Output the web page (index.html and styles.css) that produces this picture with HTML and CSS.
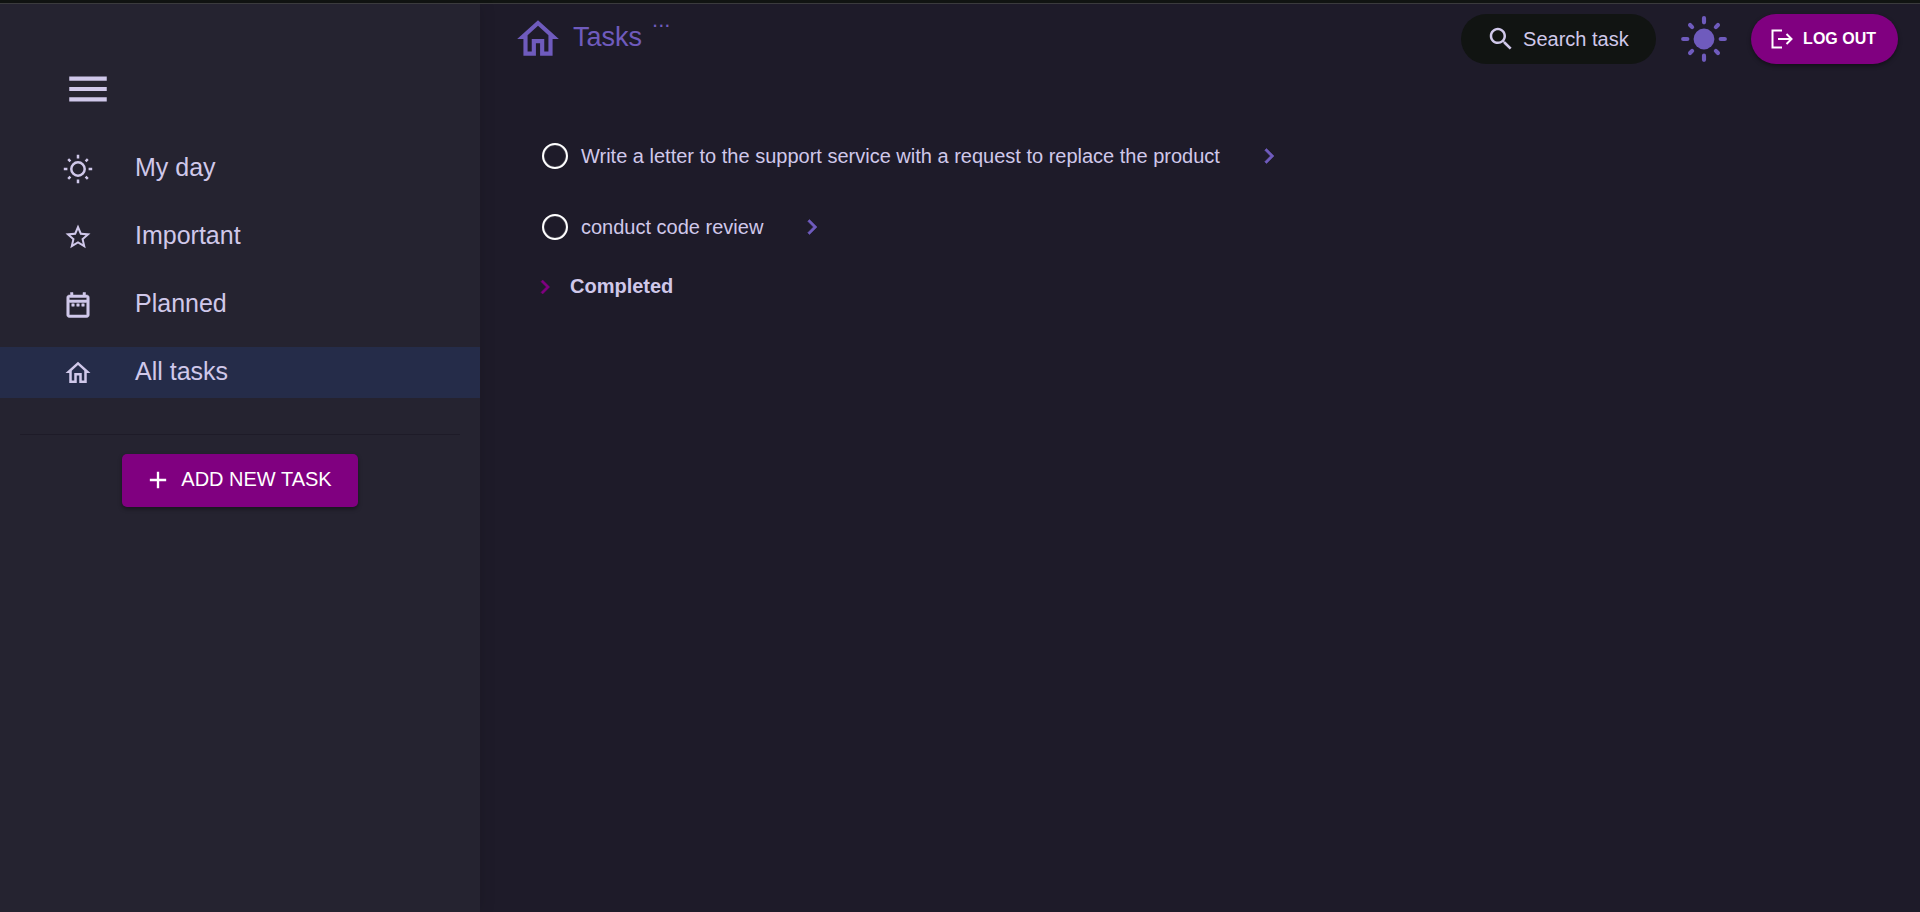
FILE: index.html
```html
<!DOCTYPE html>
<html lang="en">
<head>
<meta charset="utf-8">
<title>Tasks</title>
<link rel="stylesheet" href="styles.css">
</head>
<body>
<div class="layout">
  <aside class="sidebar">
    <button class="menu-button" type="button" aria-label="Menu">
      <svg class="icon-large" viewBox="0 0 24 24"><path d="M3 18h18v-2H3v2zm0-5h18v-2H3v2zm0-7v2h18V6H3z"/></svg>
    </button>
    <nav class="nav">
      <a class="nav-link" href="#my-day">
        <svg class="icon" viewBox="0 0 30 30"><g fill="none" stroke="currentColor" stroke-width="2.5"><circle cx="15" cy="15" r="6.7"/><path d="M15 .8v3.600M15 25.600v3.600M.8 15h3.600M25.600 15h3.600M5.200 5.200l2.200 2.200M22.600 22.600l2.200 2.200M5.200 24.800l2.200-2.200M22.600 7.400l2.200-2.200"/></g></svg>
        <span>My day</span>
      </a>
      <a class="nav-link" href="#important">
        <svg class="icon" viewBox="0 0 24 24"><path d="M22 9.240l-7.190-.62L12 2 9.190 8.630 2 9.240l5.460 4.730L5.820 21 12 17.270 18.180 21l-1.630-7.030L22 9.240zM12 15.400l-3.760 2.270 1-4.280-3.320-2.880 4.380-.38L12 6.100l1.710 4.040 4.380.38-3.320 2.880 1 4.280L12 15.400z"/></svg>
        <span>Important</span>
      </a>
      <a class="nav-link" href="#planned">
        <svg class="icon icon-calendar" viewBox="0 0 24 24"><path d="M7 11h2v2H7v-2zm14-5v14c0 1.100-.9 2-2 2H5c-1.110 0-2-.9-2-2l.01-14c0-1.100.88-2 1.990-2h1V2h2v2h8V2h2v2h1c1.100 0 2 .9 2 2zM5 8h14V6H5v2zm14 12V10H5v10h14zm-4-7h2v-2h-2v2zm-4 0h2v-2h-2v2z"/></svg>
        <span>Planned</span>
      </a>
      <a class="nav-link nav-link-active" href="#all" aria-current="page">
        <svg class="icon" viewBox="0 0 24 24"><path d="M12 5.690l5 4.500V18h-2v-6H9v6H7v-7.810l5-4.500M12 3L2 12h3v8h6v-6h2v6h6v-8h3L12 3z"/></svg>
        <span>All tasks</span>
      </a>
    </nav>
    <hr class="divider">
    <button class="add-button" type="button">
      <svg class="icon-add" viewBox="0 0 24 24"><path d="M19 13h-6v6h-2v-6H5v-2h6V5h2v6h6v2z"/></svg>
      <span>ADD NEW TASK</span>
    </button>
  </aside>
  <main class="main">
    <header class="header">
      <svg class="icon-large" viewBox="0 0 24 24"><path d="M12 5.690l5 4.500V18h-2v-6H9v6H7v-7.810l5-4.500M12 3L2 12h3v8h6v-6h2v6h6v-8h3L12 3z"/></svg>
      <h1 class="title">Tasks</h1>
      <button class="more-button" type="button" aria-label="More options">...</button>
      <div class="actions">
        <label class="search">
          <svg class="icon" viewBox="0 0 24 24"><path d="M15.500 14h-.79l-.28-.27C15.410 12.590 16 11.110 16 9.500 16 5.910 13.090 3 9.500 3S3 5.910 3 9.500 5.910 16 9.500 16c1.610 0 3.090-.59 4.230-1.570l.27.28v.79l5 4.990L20.490 19l-4.990-5zm-6 0C7.010 14 5 11.990 5 9.500S7.010 5 9.500 5 14 7.010 14 9.500 11.990 14 9.500 14z"/></svg>
          <input class="search-input" type="text" placeholder="Search task" aria-label="Search task">
        </label>
        <button class="theme-button" type="button" aria-label="Toggle theme">
          <svg class="icon-large" viewBox="0 0 24 24"><circle cx="12" cy="12" r="5"/><path fill="none" stroke="currentColor" stroke-width="2" stroke-linecap="round" d="M12 2v2M12 20v2M2 12h2M20 12h2M5.300 5.300l1 1M17.700 17.700l1 1M5.300 18.700l1-1M17.700 6.300l1-1"/></svg>
        </button>
        <button class="logout-button" type="button">
          <svg class="icon-logout" viewBox="0 0 24 24"><path fill="none" stroke="currentColor" stroke-width="2" d="M13 3.500H3.500v17H13M9 12h13M17.500 7l5 5-5 5"/></svg>
          LOG OUT
        </button>
      </div>
    </header>
    <ul class="tasks">
      <li class="task">
        <input class="task-check" type="checkbox" id="task-1">
        <label for="task-1">Write a letter to the support service with a request to replace the product</label>
        <button class="chevron" type="button" aria-label="Open task"><svg class="icon-chevron" viewBox="0 0 24 24"><path d="M10 6L8.590 7.410 13.170 12l-4.580 4.590L10 18l6-6z"/></svg></button>
      </li>
      <li class="task">
        <input class="task-check" type="checkbox" id="task-2">
        <label for="task-2">conduct code review</label>
        <button class="chevron" type="button" aria-label="Open task"><svg class="icon-chevron" viewBox="0 0 24 24"><path d="M10 6L8.590 7.410 13.170 12l-4.580 4.590L10 18l6-6z"/></svg></button>
      </li>
    </ul>
    <button class="completed" type="button">
      <svg class="icon-completed" viewBox="0 0 24 24"><path d="M10 6L8.590 7.410 13.170 12l-4.580 4.590L10 18l6-6z"/></svg>
      <span>Completed</span>
    </button>
  </main>
</div>
</body>
</html>
```
FILE: styles.css
```css
* { box-sizing: border-box; }

body {
  margin: 0;
  background: #1e1b29;
  color: #d0c8ea;
  font: 20px/24px "Liberation Sans", Arial, sans-serif;
}

button {
  margin: 0;
  padding: 0;
  border: 0;
  background: none;
  color: inherit;
  font: inherit;
  cursor: pointer;
}

svg {
  display: block;
  flex: none;
  fill: currentColor;
}

.icon { width: 30px; height: 30px; }
.icon-large { width: 50px; height: 50px; }
.icon-add { width: 28px; height: 28px; }
.icon-logout { width: 24px; height: 24px; }
.icon-chevron { width: 30px; height: 30px; }
.icon-completed { width: 28px; height: 28px; color: #800080; }

.icon-calendar,
.icon-chevron,
.icon-completed {
  stroke: currentColor;
  stroke-width: 0.4;
}

.layout {
  display: grid;
  grid-template-columns: 1fr 3fr;
  min-height: 100vh;
  border-top: 3px solid #111412;
}

.sidebar {
  display: flex;
  flex-direction: column;
  padding-top: 60px;
  border-top: 1px solid #3b3b3d;
  background: #252330;
  box-shadow: 0 0 16px rgba(0, 0, 0, 0.12);
}

.menu-button {
  align-self: flex-start;
  margin-left: 63px;
}

.nav {
  display: flex;
  flex-direction: column;
  gap: 17px;
  margin-top: 29px;
}

.nav-link {
  display: flex;
  align-items: center;
  gap: 42px;
  height: 51px;
  padding-left: 63px;
  color: inherit;
  font-size: 25px;
  line-height: 28px;
  text-decoration: none;
}

.nav-link span { padding-bottom: 4px; }

.nav-link-active { background: #252c49; }

.divider {
  width: calc(100% - 40px);
  margin: 36px 20px 19px;
  border: 0;
  border-top: 1px solid #1e1b28;
}

.add-button {
  display: flex;
  align-items: center;
  align-self: center;
  gap: 9px;
  padding: 12px 26px 13px 22px;
  border-radius: 5px;
  background: #800080;
  box-shadow: 0 2px 4px rgba(0, 0, 0, 0.4);
  color: #fff;
}

.add-button span,
.completed span { padding-bottom: 2px; }

.main {
  border-top: 1px solid #3b3b3d;
}

.header {
  display: flex;
  align-items: flex-start;
  padding: 10px 22px 0 33px;
  color: #6f5bbd;
}

.title {
  margin: 7px 10px 0;
  font-size: 27px;
  font-weight: 400;
  line-height: 32px;
}

.more-button {
  font-size: 22px;
  line-height: 12px;
}

.actions {
  display: flex;
  align-items: center;
  margin-left: auto;
}

.search {
  display: flex;
  align-items: center;
  gap: 7px;
  width: 195px;
  height: 50px;
  padding-left: 25px;
  border-radius: 25px;
  background: #111412;
  color: #d0c8ea;
}

.search-input {
  width: 120px;
  padding: 0;
  border: 0;
  outline: 0;
  background: none;
  color: inherit;
  font: inherit;
}

.search-input::placeholder { color: inherit; opacity: 1; }

.theme-button { margin: 0 22px 0 23px; }

.logout-button {
  display: flex;
  align-items: center;
  gap: 10px;
  height: 50px;
  padding: 0 22px 0 18px;
  border-radius: 25px;
  background: #800080;
  box-shadow: 0 2px 4px rgba(0, 0, 0, 0.4);
  color: #fff;
  font-size: 16px;
  font-weight: 700;
}

.tasks {
  display: flex;
  flex-direction: column;
  gap: 41px;
  margin: 77px 0 0;
  padding: 0 0 0 62px;
  list-style: none;
}

.task {
  display: flex;
  align-items: center;
  height: 30px;
}

.task-check {
  appearance: none;
  width: 26px;
  height: 26px;
  margin: 0 13px 0 0;
  border: 2px solid #fff;
  border-radius: 50%;
  box-shadow: inset 0 0 1px #fff;
}

.chevron {
  margin-left: 34px;
  color: #6f5bbd;
}

.completed {
  display: flex;
  align-items: center;
  gap: 11px;
  margin: 31px 0 0 51px;
  font-weight: 700;
}
```
